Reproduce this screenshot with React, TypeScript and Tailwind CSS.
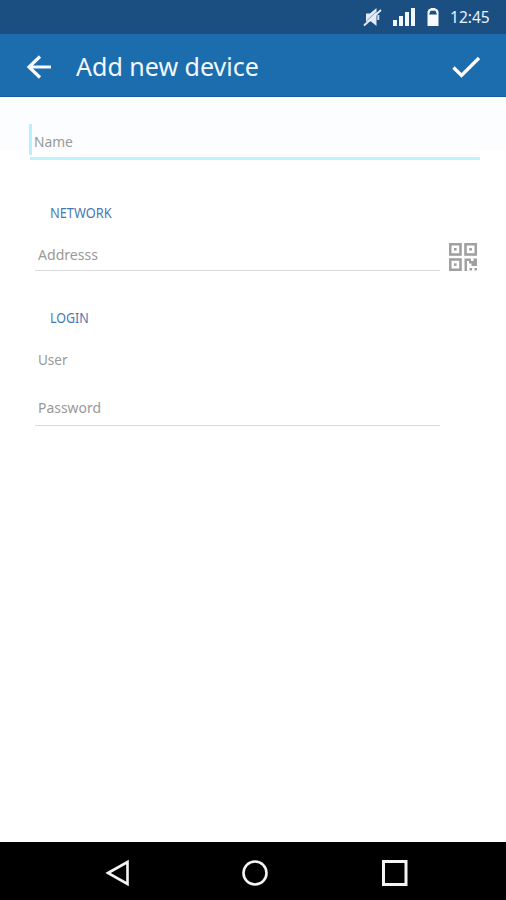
import React from "react";

function StatusBar() {
  return (
    <div className="flex h-[34px] items-center justify-end bg-[#1b4f82] pr-[16px]">
      <svg width="20" height="22" viewBox="0 0 20 22" className="mr-[9px]" aria-label="Muted">
        <path d="M3 7.500 H7 L13.500 2 V20 L8 15.500 H3 Z" fill="#e3eaf6" />
        <path d="M4 14.500 L14 5" stroke="#7f9dc0" strokeWidth="1" />
        <path d="M1 19.500 L18 4" stroke="#e6ecf6" strokeWidth="1.800" />
        <path d="M15.300 9 V14" stroke="#cfdbea" strokeWidth="2" />
      </svg>
      <svg width="24" height="20" viewBox="0 0 24 20" className="mr-[11px]" aria-label="Signal" fill="#f2f6fd">
        <rect x="1" y="13" width="4" height="6" />
        <rect x="7" y="9" width="4" height="10" />
        <rect x="13" y="5" width="4" height="14" />
        <rect x="19" y="1" width="4" height="18" />
      </svg>
      <svg width="12" height="20" viewBox="0 0 12 20" className="mr-[11px]" aria-label="Battery">
        <path d="M3.500 1 H8.500 V2 H10 L11.500 4.500 V19 H0.500 V4.500 L2 2 H3.500 Z" fill="#f8faff" />
        <path d="M3.500 3.800 H8.500 L10 7.500 H2 Z" fill="#1b4f82" />
      </svg>
      <div className="h-[34px] w-[40px] text-[16px] leading-[34px] whitespace-nowrap text-[#eaf3ff]">
        <span className="inline-block origin-left scale-x-[0.970]">12:45</span>
      </div>
    </div>
  );
}

function AppBar() {
  return (
    <header className="flex h-[63px] items-center border-b border-[#17609f] bg-[#1c6dae] pr-[25px] pl-[26px] text-[#f3f8ff]">
      <svg width="26" height="24" viewBox="0 0 26 24" className="mt-[3px]" fill="none" stroke="#f8fbff" strokeWidth="3.200">
        <path d="M14 1.500 L3 12 L14 22.500 M3 12 H25" />
      </svg>
      <h1 className="mt-[2px] ml-[24px] flex-1 text-[26px] leading-[60px] font-normal whitespace-nowrap">
        <span className="inline-block origin-left scale-x-[0.963]">Add new device</span>
      </h1>
      <svg width="29" height="23" viewBox="0 0 29 23" className="mt-[5px]" fill="none" stroke="#fff" strokeWidth="3.300">
        <path d="M1.500 11.500 L9.500 19.500 L27 2" />
      </svg>
    </header>
  );
}

function QrIcon() {
  return (
    <svg width="28" height="28" viewBox="0 0 28 28" fill="none">
      <g stroke="#a0a0a0" strokeWidth="2.600">
        <rect x="1.200" y="1.200" width="10.300" height="10.300" />
        <rect x="16.500" y="1.200" width="10.300" height="10.300" />
        <rect x="1.200" y="16.500" width="10.300" height="10.300" />
      </g>
      <g fill="#a0a0a0">
        <rect x="5" y="5" width="2.600" height="2.600" />
        <rect x="20.300" y="5" width="2.600" height="2.600" />
        <rect x="5" y="20.300" width="2.600" height="2.600" />
        <path d="M15.500 15.500 H22 V18 H24.500 V15.500 H28 V23 H22.500 V20.500 H20 V18 H18 V28 H15.500 Z" />
        <rect x="20.500" y="25" width="2.500" height="2.500" />
        <rect x="25.500" y="25" width="2.500" height="2.500" />
      </g>
    </svg>
  );
}

function DeviceForm() {
  return (
    <main className="h-[745px] bg-white text-[14.500px] text-[#999]">
      <div className="h-[53px] bg-[#fbfdff] pt-[27px] pl-[29px]">
        <div className="flex h-[31px] w-[451px] items-center border-l-[3px] border-[#b9f0fd] pt-[4px] pl-[2px]">
          <span className="inline-block origin-left scale-x-[0.950]">Name</span>
        </div>
      </div>
      <div className="mt-[7px] ml-[30px] h-[3px] w-[450px] bg-[#bff2fd]" />
      <h2 className="mt-[43px] ml-[50px] h-[20px] text-[14px] leading-[20px] font-normal text-[#4878b4]">
        <span className="inline-block origin-left scale-x-[0.915]">NETWORK</span>
      </h2>
      <div className="mt-[20px] ml-[35px] flex h-[28px] gap-[9px]">
        <div className="flex w-[405px] items-start border-b border-[#d9d9d9] pl-[3px] leading-[22px]">
          <span className="inline-block origin-left scale-x-[0.970]">Addresss</span>
        </div>
        <QrIcon />
      </div>
      <h2 className="mt-[37px] ml-[50px] h-[20px] text-[14px] leading-[20px] font-normal text-[#4878b4]">
        <span className="inline-block origin-left scale-x-[0.890]">LOGIN</span>
      </h2>
      <div className="mt-[21px] ml-[38px] h-[20px] leading-[20px]">
        <span className="inline-block origin-left scale-x-[0.930]">User</span>
      </div>
      <div className="mt-[28px] ml-[35px] h-[29px] w-[405px] border-b border-[#d9d9d9] pl-[3px] leading-[20px]">
        <span className="inline-block origin-left scale-x-[0.960]">Password</span>
      </div>
    </main>
  );
}

function NavigationBar() {
  return (
    <nav className="flex h-[58px] items-center bg-black pt-[4px] pl-[105px]">
      <svg width="26" height="28" viewBox="0 0 26 28" fill="none" stroke="#f4f4f4" strokeWidth="2.600">
        <path d="M3 14 L22.500 3 V25 Z" />
      </svg>
      <svg width="28" height="28" viewBox="0 0 28 28" className="ml-[110px]" fill="none" stroke="#f4f4f4" strokeWidth="2.600">
        <circle cx="14" cy="14" r="11.500" />
      </svg>
      <svg width="28" height="28" viewBox="0 0 28 28" className="ml-[112px]" fill="none" stroke="#f4f4f4" strokeWidth="3">
        <rect x="2.500" y="2.500" width="22.500" height="23" />
      </svg>
    </nav>
  );
}

export default function App() {
  return (
    <div className="h-[900px] w-[506px] overflow-hidden bg-white font-['Noto_Sans','Open_Sans',sans-serif]">
      <StatusBar />
      <AppBar />
      <DeviceForm />
      <NavigationBar />
    </div>
  );
}
